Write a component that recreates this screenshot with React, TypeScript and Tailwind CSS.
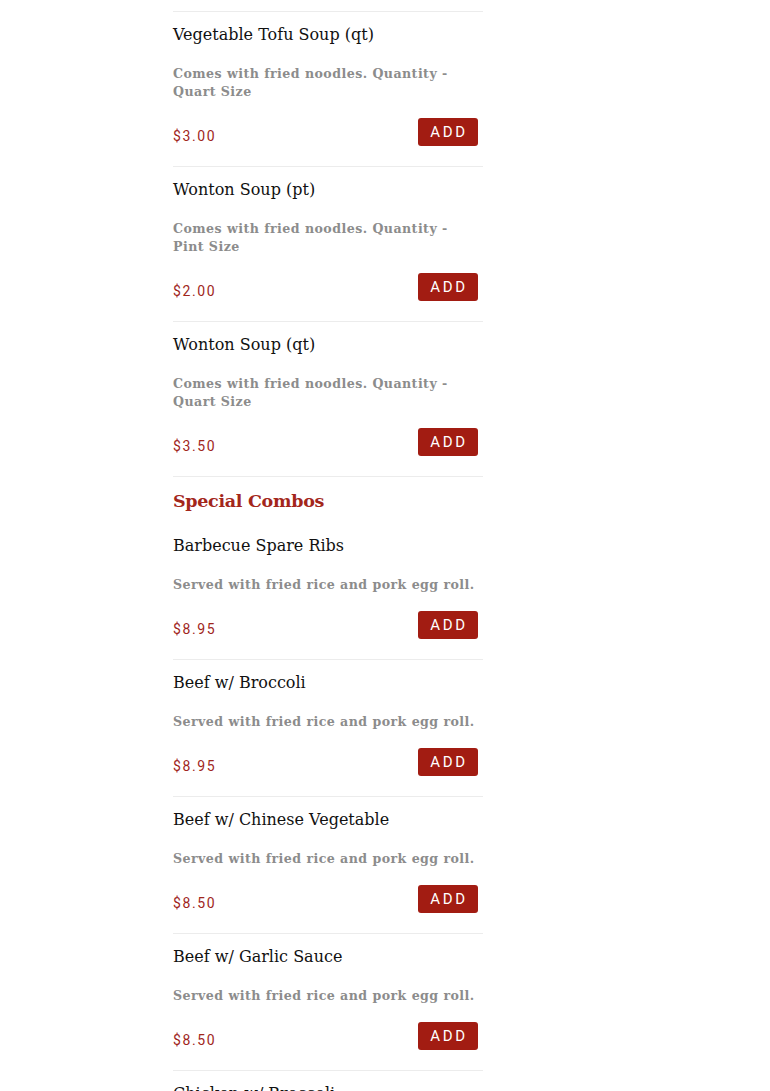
import React from 'react';

type Item = { name: string; desc: string; price: string };

const soups: Item[] = [
  { name: 'Vegetable Tofu Soup (qt)', desc: 'Comes with fried noodles. Quantity - Quart Size', price: '$3.00' },
  { name: 'Wonton Soup (pt)', desc: 'Comes with fried noodles. Quantity - Pint Size', price: '$2.00' },
  { name: 'Wonton Soup (qt)', desc: 'Comes with fried noodles. Quantity - Quart Size', price: '$3.50' },
];

const combos: Item[] = [
  { name: 'Barbecue Spare Ribs', desc: 'Served with fried rice and pork egg roll.', price: '$8.95' },
  { name: 'Beef w/ Broccoli', desc: 'Served with fried rice and pork egg roll.', price: '$8.95' },
  { name: 'Beef w/ Chinese Vegetable', desc: 'Served with fried rice and pork egg roll.', price: '$8.50' },
  { name: 'Beef w/ Garlic Sauce', desc: 'Served with fried rice and pork egg roll.', price: '$8.50' },
  { name: 'Chicken w/ Broccoli', desc: 'Served with fried rice and pork egg roll.', price: '$8.50' },
];

const slab = "font-['DejaVu_Serif',serif]";

function AddButton() {
  return (
    <button className="w-[60px] h-[28px] rounded-[3px] bg-[#a21c12] text-white text-[15px] tracking-[2.7px] font-['Roboto',sans-serif] flex items-center justify-center pl-[2px]">
      ADD
    </button>
  );
}

function MenuItem({ item, first }: { item: Item; first?: boolean }) {
  return (
    <div className={first ? 'pt-[20px] pb-[20px]' : 'border-t border-[#ececec] pt-[11px] pb-[20px]'}>
      <h3 className={`${slab} text-[16px] leading-[24px] text-[#111]`}>{item.name}</h3>
      <p className={`${slab} mt-[18px] text-[12.6px] leading-[18px] font-bold text-[#8c8c8c] tracking-[0.45px]`}>
        {item.desc}
      </p>
      <div className="mt-[17px] flex items-end justify-between pr-[5px]">
        <span className="font-['Roboto',sans-serif] text-[14px] leading-[20px] tracking-[1.6px] text-[#a0261c]">{item.price}</span>
        <AddButton />
      </div>
    </div>
  );
}

export default function App() {
  return (
    <div className="min-h-screen bg-white overflow-hidden">
      <div className="ml-[173px] w-[310px] -mt-[10px]">
        {/* tail of the previous item */}
        <div className="h-[21px]" />
        {soups.map((s) => (
          <MenuItem key={s.name} item={s} />
        ))}

        {/* Special Combos */}
        <div className="border-t border-[#ececec] pt-[11px]">
          <h2 className={`${slab} text-[17.5px] leading-[26px] font-bold tracking-[-0.3px] text-[#a3261b]`}>Special Combos</h2>
        </div>
        {combos.map((c, i) => (
          <MenuItem key={c.name} item={c} first={i === 0} />
        ))}
      </div>
    </div>
  );
}
